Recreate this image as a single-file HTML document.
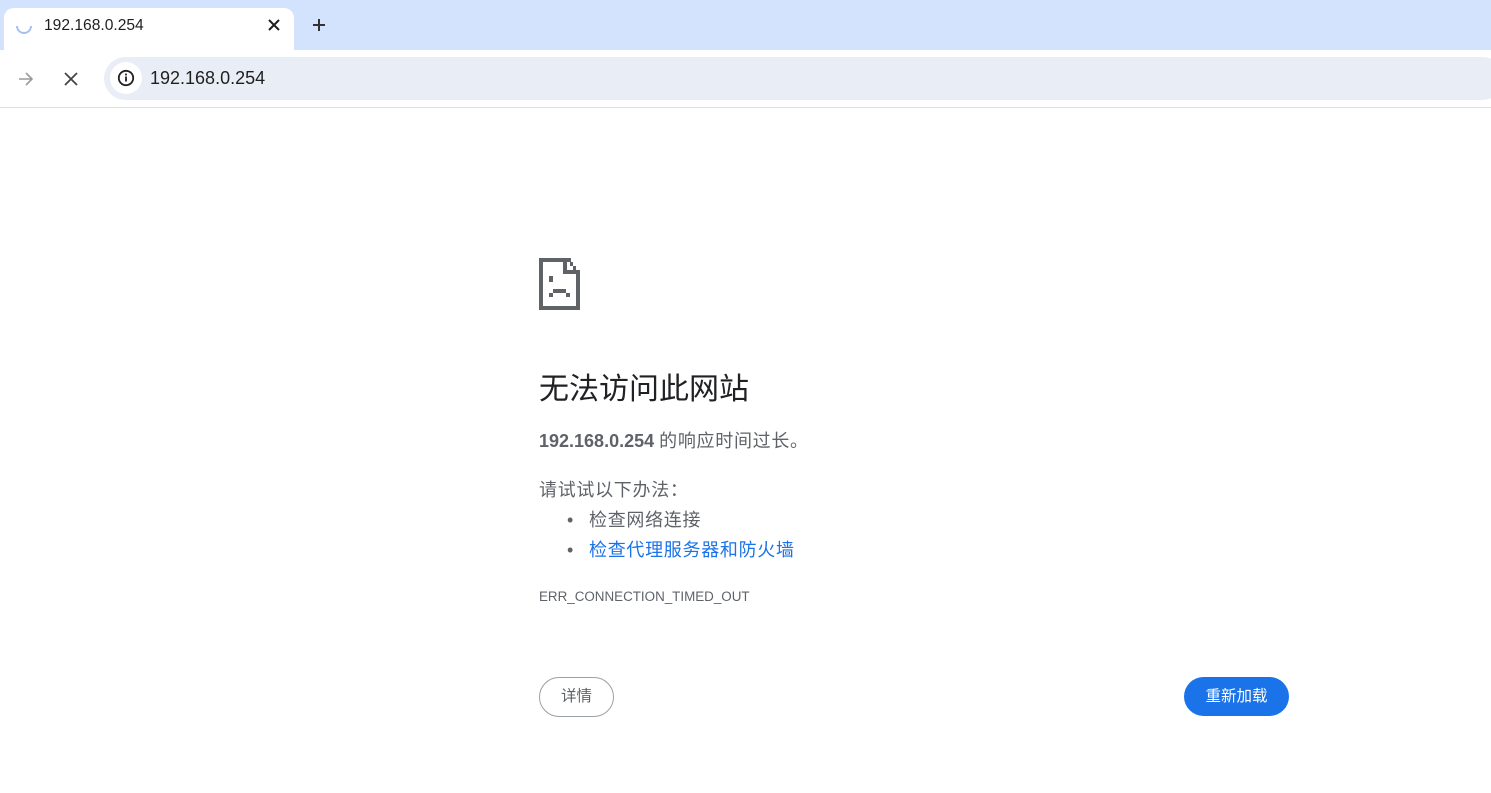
<!DOCTYPE html>
<html><head><meta charset="utf-8">
<style>
*{margin:0;padding:0;box-sizing:border-box}
body{width:1491px;height:793px;background:#fff;font-family:"Liberation Sans","Noto Sans CJK SC",sans-serif;position:relative;overflow:hidden}
.top{position:absolute;left:0;top:0;width:1491px;height:50px;background:#d3e3fd}
.tab{position:absolute;left:4px;top:8px;width:290px;height:42px;background:#fff;border-radius:10px 10px 0 0}
.tabt{position:absolute;left:44px;top:17px;font-size:15.6px;color:#1f1f1f}
.bar{position:absolute;left:0;top:50px;width:1491px;height:58px;background:#fff;border-bottom:1px solid #e0e0e0}
.omni{position:absolute;left:104px;top:57px;width:1400px;height:43px;background:#e9eef6;border-radius:22px}
.info{position:absolute;left:110px;top:62px;width:32px;height:32px;border-radius:50%;background:#fff}
.url{position:absolute;left:150px;top:68px;font-size:18px;color:#1f1f1f}
.t{position:absolute;color:#5f6368;line-height:1;white-space:nowrap}
.c{letter-spacing:0.7px}
</style></head><body>
<div class="top"></div>
<div class="tab"></div>
<svg style="position:absolute;left:14px;top:16px" width="20" height="20"><path d="M3 10 A7 7 0 0 0 17 10" stroke="#a8c0ef" stroke-width="2" fill="none"/></svg>
<div class="tabt">192.168.0.254</div>
<svg style="position:absolute;left:267px;top:18px" width="14" height="14"><path d="M2 2L12 12M12 2L2 12" stroke="#1f1f1f" stroke-width="2"/></svg>
<svg style="position:absolute;left:311px;top:17px" width="16" height="16"><path d="M8 2V14M2 8H14" stroke="#333" stroke-width="2"/></svg>
<div class="bar"></div>
<svg style="position:absolute;left:17px;top:70px" width="18" height="18"><path d="M2 9H15M9 3L15 9L9 15" stroke="#9a9a9a" stroke-width="1.6" fill="none"/></svg>
<svg style="position:absolute;left:63px;top:71px" width="16" height="16"><path d="M2 2L14 14M14 2L2 14" stroke="#444" stroke-width="1.8"/></svg>
<div class="omni"></div>
<div class="info"></div>
<svg style="position:absolute;left:117px;top:69px" width="18" height="18"><circle cx="9" cy="9" r="7.2" stroke="#1f1f1f" stroke-width="1.8" fill="none"/><rect x="8.1" y="7.5" width="1.8" height="5" fill="#1f1f1f"/><rect x="8.1" y="4.6" width="1.8" height="1.8" fill="#1f1f1f"/></svg>
<div class="url">192.168.0.254</div>

<svg style="position:absolute;left:539px;top:258px" width="42" height="52" viewBox="0 0 42 52" shape-rendering="crispEdges">
<path d="M0 0H28V4H4V48H37V16H41V52H0Z" fill="#5f6368"/>
<rect x="28" y="0" width="4" height="4" fill="#5f6368"/>
<rect x="31" y="4" width="3" height="4" fill="#5f6368"/>
<rect x="34" y="8" width="3" height="4" fill="#5f6368"/>
<rect x="37" y="12" width="4" height="4" fill="#5f6368"/>
<rect x="24" y="0" width="4" height="16" fill="#5f6368"/>
<rect x="24" y="12" width="17" height="4" fill="#5f6368"/>
<rect x="10" y="18" width="4" height="6" fill="#5f6368"/>
<rect x="10" y="35" width="4" height="4" fill="#5f6368"/>
<rect x="14" y="31" width="13" height="4" fill="#5f6368"/>
<rect x="27" y="35" width="4" height="4" fill="#5f6368"/>
</svg>

<div class="t" style="left:539px;top:375px;font-size:30px;color:#202124">无法访问此网站</div>
<div class="t" style="left:539px;top:432px;font-size:18px"><b style="font-weight:600">192.168.0.254</b> <span class="c">的响应时间过长。</span></div>
<div class="t c" style="left:539px;top:481px;font-size:18px">请试试以下办法：</div>
<div class="t" style="left:567px;top:511px;font-size:18px">•</div>
<div class="t c" style="left:589px;top:511px;font-size:18px">检查网络连接</div>
<div class="t" style="left:567px;top:541px;font-size:18px">•</div>
<div class="t c" style="left:589px;top:541px;font-size:18px;color:#1a73e8">检查代理服务器和防火墙</div>
<div class="t" style="left:539px;top:590px;font-size:13.4px">ERR_CONNECTION_TIMED_OUT</div>
<div style="position:absolute;left:539px;top:677px;width:75px;height:40px;border:1px solid #9aa0a6;border-radius:20px;text-align:center;line-height:38px;font-size:15.5px;color:#5f6368">详情</div>
<div style="position:absolute;left:1184px;top:677px;width:105px;height:39px;background:#1a73e8;border-radius:20px;text-align:center;line-height:39px;font-size:15.5px;color:#fff">重新加载</div>
</body></html>
